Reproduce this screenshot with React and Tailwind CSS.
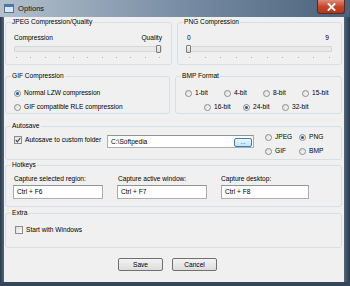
import React from 'react'

const font = { fontFamily: '"Liberation Sans", Arial, sans-serif' }

function Radio({ checked, label, className = '' }) {
  return (
    <div className={`flex h-[8px] items-center gap-[3px] ${className}`}>
      <span className="flex h-[7px] w-[7px] shrink-0 items-center justify-center rounded-full border border-[#8a8c8e] bg-gradient-to-br from-[#dcdcdc] to-[#fbfbfb]">
        {checked && <span className="h-[3px] w-[3px] rounded-full bg-[#1d5b9c]" />}
      </span>
      <span className="whitespace-nowrap leading-[8px]">{label}</span>
    </div>
  )
}

function Checkbox({ checked, label, className = '' }) {
  return (
    <div className={`flex h-[8px] items-center gap-[3px] ${className}`}>
      <span className="flex h-[8px] w-[8px] shrink-0 items-center justify-center border border-[#8a8c8e] bg-gradient-to-br from-[#dedede] to-[#fafafa]">
        {checked && (
          <svg width="6" height="6" viewBox="0 0 6 6">
            <path d="M0.8 3.2 L2.4 4.8 L5.3 1" fill="none" stroke="#3b3b3b" strokeWidth="1.1" />
          </svg>
        )}
      </span>
      <span className="whitespace-nowrap leading-[8px]">{label}</span>
    </div>
  )
}

function Group({ title, className = '', children }) {
  return (
    <fieldset className={`rounded-[3px] border border-[#d5dfe5] px-0 ${className}`}>
      <legend className="ml-[5px] px-[1px] leading-[8px]">{title}</legend>
      {children}
    </fieldset>
  )
}

function Slider({ count, thumbLeft }) {
  return (
    <>
      <div className="relative mt-[3px] h-[8px]">
        <div className="absolute left-0 right-0 top-[1px] h-[6px] rounded-[1px] border border-[#d6d6d6] bg-[#e7e9ea]" />
        <div
          className={`absolute top-0 h-[8px] w-[5px] rounded-[1px] border border-[#7c7c7c] bg-gradient-to-b from-[#f4f4f4] to-[#dadada] ${
            thumbLeft ? 'left-[-1px]' : 'right-[1px]'
          }`}
        />
      </div>
      <div className="mt-[4px] flex justify-between px-[2px]">
        {Array.from({ length: count }).map((_, i) => (
          <span key={i} className="h-[1px] w-[1px] bg-[#b0b0b0]" />
        ))}
      </div>
    </>
  )
}

function Input({ value, className = '', children }) {
  return (
    <div className={`flex items-center border border-[#abadb3] border-t-[#8f9296] bg-white pl-[3px] leading-[8px] ${className}`}>
      {value}
      {children}
    </div>
  )
}

export default function App() {
  return (
    <div className="flex h-[286px] w-[350px] flex-col bg-[#3e5066] text-[6.6px] text-black" style={font}>
      {/* title bar */}
      <div className="relative flex h-[17px] shrink-0 items-center bg-gradient-to-r from-[#b3c0cc] via-[#7a8fa6] to-[#4b627c]">
        <div className="ml-[4px] flex h-[9px] w-[10px] flex-col border border-[#5a7490] bg-white">
          <div className="h-[2px] bg-[#3c7bc4]" />
          <div className="flex-1 bg-[#dbe7f4]" />
        </div>
        <span className="ml-[4px] text-[7.6px] text-[#111]">Options</span>
        <div className="absolute right-[5px] top-0 flex h-[14px] w-[28px] items-center justify-center rounded-b-[3px] border border-t-0 border-[#5a2a20] bg-gradient-to-b from-[#e08a74] via-[#c5462c] to-[#b2361f]">
          <svg width="9" height="8" viewBox="0 0 9 8">
            <path d="M1.5 1 L7.5 7 M7.5 1 L1.5 7" stroke="#fff" strokeWidth="1.8" strokeLinecap="square" />
          </svg>
        </div>
      </div>

      <div className="flex flex-1">
        <div className="w-[4px] bg-gradient-to-r from-[#2c3a4a] to-[#52667c]" />
        <div className="flex h-[265px] w-[340px] flex-col bg-[#f0f0f0] pl-[1px] pr-[2px]">
          {/* row 1 */}
          <div className="mt-[1px] flex gap-[5px]">
            <Group title="JPEG Compression/Quality" className="h-[47px] w-[167px]">
              <div className="pl-[8px] pr-[9px] pt-[8px]">
                <div className="flex h-[8px] justify-between leading-[8px]">
                  <span>Compression</span>
                  <span>Quality</span>
                </div>
                <Slider count={11} />
              </div>
            </Group>
            <Group title="PNG Compression" className="h-[47px] flex-1">
              <div className="pl-[9px] pr-[9px] pt-[8px]">
                <div className="flex h-[8px] justify-between pr-[3px] leading-[8px]">
                  <span>0</span>
                  <span>9</span>
                </div>
                <Slider count={10} thumbLeft />
              </div>
            </Group>
          </div>

          {/* row 2 */}
          <div className="mt-[7px] flex gap-[5px]">
            <Group title="GIF Compression" className="h-[42px] w-[167px]">
              <div className="flex flex-col gap-[6px] pl-[8px] pt-[9px]">
                <Radio checked label="Normal LZW compression" />
                <Radio label="GIF compatible RLE compression" />
              </div>
            </Group>
            <Group title="BMP Format" className="h-[42px] flex-1">
              <div className="flex flex-col gap-[6px] pt-[9px]">
                <div className="flex pl-[9px]">
                  <Radio label="1-bit" className="w-[39px]" />
                  <Radio label="4-bit" className="w-[39px]" />
                  <Radio label="8-bit" className="w-[39px]" />
                  <Radio label="15-bit" className="w-[39px]" />
                </div>
                <div className="flex pl-[28px]">
                  <Radio label="16-bit" className="w-[39px]" />
                  <Radio checked label="24-bit" className="w-[39px]" />
                  <Radio label="32-bit" className="w-[39px]" />
                </div>
              </div>
            </Group>
          </div>

          {/* autosave */}
          <Group title="Autosave" className="mt-[8px] h-[38px]">
            <div className="flex items-start pl-[8px] pt-[3px]">
              <Checkbox checked label="Autosave to custom folder" className="mt-[3px] w-[93px]" />
              <Input value="C:\Softpedia" className="relative mt-[2px] h-[13px] w-[147px]">
                <button className="absolute right-[1px] top-[2px] h-[9px] w-[18px] rounded-[2px] border border-[#3c7fb1] bg-gradient-to-b from-[#eaf6fd] to-[#bee6fd] text-[6px] leading-[5px]">
                  ...
                </button>
              </Input>
              <div className="ml-[11px] grid grid-cols-[34px_34px] gap-y-[6px]">
                <Radio label="JPEG" />
                <Radio checked label="PNG" />
                <Radio label="GIF" />
                <Radio label="BMP" />
              </div>
            </div>
          </Group>

          {/* hotkeys */}
          <Group title="Hotkeys" className="mt-[1px] h-[46px]">
            <div className="flex gap-[14px] pl-[7px] pt-[6px]">
              <div className="w-[90px]">
                <div className="h-[8px] pl-[1px] leading-[8px]">Capture selected region:</div>
                <Input value="Ctrl + F6" className="mt-[2px] h-[14px]" />
              </div>
              <div className="w-[90px]">
                <div className="h-[8px] pl-[1px] leading-[8px]">Capture active window:</div>
                <Input value="Ctrl + F7" className="mt-[2px] h-[14px]" />
              </div>
              <div className="w-[88px]">
                <div className="h-[8px] leading-[8px]">Capture desktop:</div>
                <Input value="Ctrl + F8" className="mt-[2px] h-[14px]" />
              </div>
            </div>
          </Group>

          {/* extra */}
          <Group title="Extra" className="mt-[2px] h-[39px]">
            <div className="pl-[9px] pt-[9px]">
              <Checkbox label="Start with Windows" />
            </div>
          </Group>

          <div className="mt-[10px] flex gap-[9px] pl-[113px]">
            <button className="h-[13px] w-[45px] rounded-[2px] border border-[#707070] bg-gradient-to-b from-[#f3f3f3] to-[#dcdcdc] leading-[11px]">
              Save
            </button>
            <button className="h-[13px] w-[45px] rounded-[2px] border border-[#707070] bg-gradient-to-b from-[#f3f3f3] to-[#dcdcdc] leading-[11px]">
              Cancel
            </button>
          </div>
        </div>
        <div className="flex-1 bg-gradient-to-r from-[#52667c] to-[#2c3a4a]" />
      </div>
      <div className="h-[4px] bg-[#34465a]" />
    </div>
  )
}
